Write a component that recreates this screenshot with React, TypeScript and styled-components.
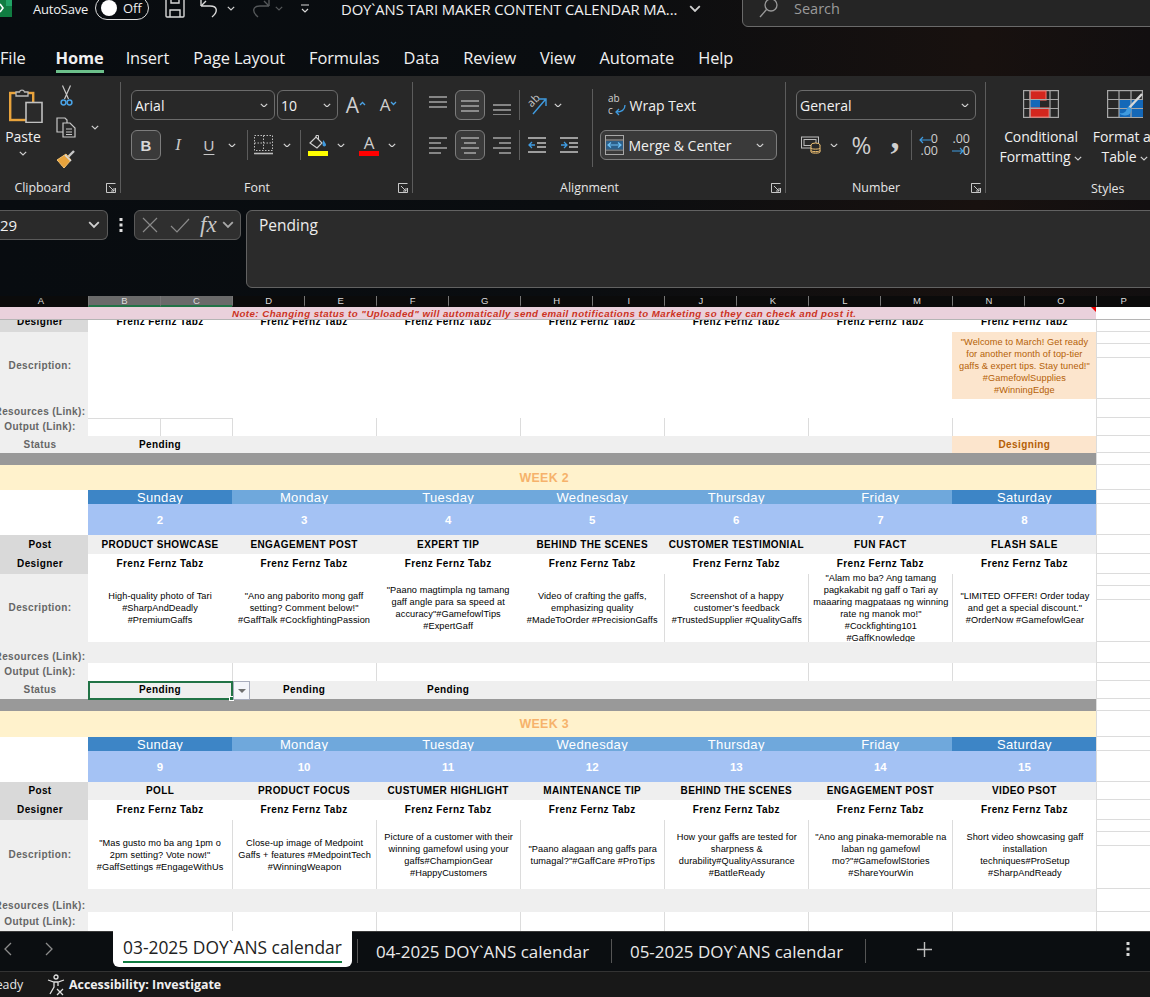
import React from 'react';
import styled, { createGlobalStyle } from 'styled-components';

const Global = createGlobalStyle`
  html, body { margin: 0; padding: 0; background: #0a0d10; }
  #root { width: 1150px; height: 997px; overflow: hidden; }
  * { box-sizing: border-box; }
`;

const ui = `"Open Sans", "Noto Sans", "Liberation Sans", sans-serif`;
const cellFont = `"Liberation Sans", Arial, sans-serif`;

const Page = styled.div`
  width: 1150px; height: 997px; display: flex; flex-direction: column; overflow: hidden;
  font-family: ${ui}; color: #f0f0f0; background: #0a0d10;
`;
const TopBand = styled.div`
  background: linear-gradient(90deg, #080c10 0%, #0a0d10 50%, #18110f 85%, #120f10 100%);
`;
const TitleBar = styled.div`height: 42px; display: flex; align-items: flex-start; overflow: hidden;`;
const LogoMark = styled.svg`flex: none; width: 12px; height: 18px; margin-right: -12px;`;
const Slot = styled.span<{ $w?: number; $ml?: number; $mt?: number }>`
  display: inline-flex; align-items: center; justify-content: center; flex: none;
  width: ${p => (p.$w !== undefined ? `${p.$w}px` : 'auto')};
  margin-left: ${p => p.$ml || 0}px;
  margin-top: ${p => p.$mt || 0}px;
`;
const TopSlot = styled(Slot)`align-self: flex-start;`;
const AutoSave = styled.span`margin-left: 33px; font-size: 13px; line-height: 18px; width: 54px; white-space: nowrap; letter-spacing: -.2px;`;
const Toggle = styled.span`
  margin: -4px 0 0 8px; width: 54px; height: 24px; border: 1.5px solid #ddd; border-radius: 12px;
  display: flex; align-items: center; padding-left: 5px;
`;
const Knob = styled.span`width: 16px; height: 16px; border-radius: 50%; background: #fff; flex: none;`;
const ToggleText = styled.span`font-size: 13px; margin-left: 6px;`;
const DocTitle = styled.span`margin-left: 31px; margin-top: -1px; font-size: 14.85px; line-height: 20px; white-space: nowrap; width: 339px; letter-spacing: -.1px;`;
const SearchBox = styled.div`
  margin: -10px -20px 0 41px; flex: 1; height: 37px; background: #252525; border: 1px solid #6a6a6a; border-radius: 6px;
  display: flex; align-items: flex-end; padding: 0 0 8px 16px; color: #9a9a9a; font-size: 14.5px; line-height: 18px;
`;
const SearchText = styled.span`margin-left: 16px;`;

const MenuBar = styled.div`height: 34px; display: flex; gap: 24px; font-size: 16.4px; letter-spacing: -.1px;`;
const MenuItem = styled.div<{ $on?: boolean }>`
  height: 31px; line-height: 32px; white-space: nowrap;
  font-weight: ${p => (p.$on ? 700 : 400)};
  border-bottom: 3px solid ${p => (p.$on ? '#6cc08b' : 'transparent')};
  margin-left: ${p => (p.$on ? '6px' : '0')};
  margin-right: ${p => (p.$on ? '-2px' : '0')};
`;

const Ribbon = styled.div`height: 124px; background: #282828; display: flex; overflow: hidden; padding-top: 6px;`;
const Group = styled.div<{ $w: number; $pl?: number; $last?: boolean }>`
  width: ${p => p.$w}px; height: 111px; flex: none; display: flex; flex-direction: column; padding-top: 8px;
  padding-left: ${p => p.$pl || 0}px;
  border-right: ${p => (p.$last ? 'none' : '1px solid #5c5c5c')};
`;
const GroupBody = styled.div`display: flex; height: 74px; flex: none;`;
const Footer = styled.div<{ $ml?: number; $pl?: number; $mr?: number }>`
  margin-top: auto; height: 11px; display: flex; align-items: center; font-size: 12.4px; color: #e6e6e6;
  margin-left: ${p => (p.$ml || 0) - (p.$pl || 0)}px;
  padding-right: ${p => p.$mr ?? 4}px;
`;
const FooterLabel = styled.span`flex: 1; text-align: center; line-height: 11px;`;
const StylesLabel = styled.span`margin-left: 105px; margin-top: 2px; line-height: 11px;`;
const Launcher = styled.span`margin-left: 5px; width: 10px; height: 10px; flex: none; display: flex;`;

const Rows = styled.div`display: flex; flex-direction: column; gap: 10px;`;
const BtnRow = styled.div`display: flex; align-items: center; height: 30px;`;
const Combo = styled.div<{ $w: number; $ml?: number }>`
  width: ${p => p.$w}px; height: 30px; margin-left: ${p => p.$ml || 0}px; flex: none;
  border: 1px solid #6b6b6b; border-radius: 6px; display: flex; align-items: center; justify-content: space-between;
  padding: 0 6px 0 3px; font-size: 14px; color: #f2f2f2;
`;
const PressBtn = styled.div<{ $w: number; $ml?: number }>`
  width: ${p => p.$w}px; height: 30px; margin-left: ${p => p.$ml || 0}px; flex: none;
  background: #3a3a3a; border: 1px solid #7d7d7d; border-radius: 6px;
  display: flex; align-items: center; justify-content: center;
`;
const VSep = styled.span<{ $ml?: number; $h?: number }>`
  width: 1px; height: ${p => p.$h || 30}px; background: #5c5c5c; flex: none; margin-left: ${p => p.$ml || 0}px;
`;
const BoldGlyph = styled.span`font: 700 15px ${cellFont}; color: #d8d8d8;`;
const ItalicGlyph = styled.span`font: italic 400 17px "Liberation Serif", serif; color: #c8c8c8;`;
const UnderGlyph = styled.span`font: 400 15px ${cellFont}; color: #c8c8c8; text-decoration: underline; text-underline-offset: 3px;`;
const GrowA = styled.span<{ $s: number }>`font: 400 ${p => p.$s}px ${ui}; color: #cfcfcf; line-height: 20px;`;
const TinyArrow = styled.span`display: inline-flex; align-self: flex-start; margin-top: 6px;`;
const ColorA = styled.div`display: flex; flex-direction: column; align-items: center; width: 20px;`;
const ColorLetter = styled.span`font: 400 17px ${ui}; line-height: 17px; color: #cfcfcf;`;
const ColorBar = styled.span<{ $c: string }>`width: 20px; height: 5px; background: ${p => p.$c};`;
const BucketIcon = styled.svg`margin-bottom: 1px;`;

const PasteCol = styled.div`width: 46px; display: flex; flex-direction: column; align-items: center; margin-top: -3px;`;
const PasteIcon = styled.svg`margin-left: 6px; flex: none;`;
const PasteLabel = styled.span`font-size: 14px; line-height: 18px; margin-top: 5px;`;
const SmallCol = styled.div`width: 20px; margin-left: 10px; margin-top: -5px; display: flex; flex-direction: column; gap: 11px;`;

const AlignBlock = styled.div`width: 162.5px; display: flex; flex-direction: column; gap: 10px; flex: none;`;
const WrapRow = styled.div`display: flex; align-items: center; height: 30px; margin-left: 8px; font-size: 14px; gap: 4px;`;
const MergeBtn = styled.div`
  width: 177px; height: 30px; background: #3a3a3a; border: 1px solid #7d7d7d; border-radius: 6px;
  display: flex; align-items: center; padding-left: 4px; font-size: 14px; gap: 5px;
`;
const MergeChev = styled.span`margin-left: auto; margin-right: 12px; display: flex;`;
const RightBlock = styled.div`display: flex; flex-direction: column; gap: 10px; margin-left: 7px;`;
const SepTall = styled.span`width: 1px; height: 78px; background: #5c5c5c; flex: none; margin-top: -1px;`;
const Glyph = styled.span<{ $s?: number }>`font: 400 ${p => p.$s || 24}px ${ui}; color: #cfcfcf; line-height: 28px;`;
const CommaGlyph = styled.span`font: 700 36px "Liberation Serif", serif; color: #cfcfcf; line-height: 20px; transform: translateY(-9px);`;
const DecBox = styled.span`position: relative; width: 19px; height: 24px; display: block;`;
const DecText = styled.span<{ $t: number; $r: number }>`
  position: absolute; top: ${p => p.$t}px; right: ${p => p.$r}px; font: 400 12.5px ${ui}; line-height: 10px; color: #cfcfcf; white-space: nowrap;
`;
const DecArrow = styled.svg<{ $t: number }>`position: absolute; left: 0; top: ${p => p.$t}px;`;

const StyleCol = styled.div<{ $w: number; $ml?: number }>`
  width: ${p => p.$w}px; margin-left: ${p => p.$ml || 0}px; flex: none; display: flex; flex-direction: column; align-items: center;
  svg { flex: none; }
`;
const StyleLabel = styled.div`font-size: 14px; line-height: 20px; margin-top: 9px; text-align: center; white-space: nowrap; letter-spacing: -.1px;`;
const StyleChev = styled.span`display: inline-block; margin-left: 4px; line-height: 0; vertical-align: middle;`;

const FormulaBar = styled.div`
  height: 96px; display: flex; padding-top: 10px; align-items: flex-start;
  background: linear-gradient(90deg, #080c10 0%, #0a0d10 50%, #18110f 85%, #120f10 100%);
`;
const NameBox = styled.div`
  width: 108px; height: 30px; background: #2a2a2a; border: 1px solid #5a5a5a; border-left: none; border-radius: 0 6px 6px 0;
  display: flex; align-items: center; justify-content: space-between; padding-right: 7px; font-size: 15px;
`;
const Kebab = styled.span`width: 26px; height: 30px; flex: none; display: flex; align-items: center; justify-content: center;`;
const FxBox = styled.div`
  width: 107px; height: 30px; background: #2f2f2f; border: 1px solid #5a5a5a; border-radius: 6px; display: flex; align-items: center; flex: none;
`;
const FxGlyph = styled.span`font: italic 400 23px "Liberation Serif", serif; color: #c8c8c8; margin-left: 10px; width: 22px; line-height: 24px;`;
const FormulaInput = styled.div`
  flex: 1; margin: 0 -12px 0 5px; height: 78px; background: #2b2b2b; border: 1px solid #626262; border-radius: 6px;
  padding: 3px 12px; font-size: 15.5px; line-height: 22px; color: #ececec;
`;

const ColHeads = styled.div`height: 11px; display: grid; grid-template-columns: 88px repeat(14, 72.04px) 1fr; background: #0b0b0b;`;
const ColHead = styled.div<{ $sel?: boolean; $first?: boolean }>`
  font: 400 9.5px ${cellFont}; line-height: 10px; text-align: center; color: #dcdcdc; height: 11px;
  background: ${p => (p.$sel ? '#6a6a6a' : 'transparent')};
  border-left: ${p => (p.$first ? 'none' : '1px solid #777')};
  border-bottom: 2px solid ${p => (p.$sel ? '#217346' : 'transparent')};
  padding-right: ${p => (p.$first ? '6px' : '0')};
`;

const Sheet = styled.div`height: 624px; background: #fff; overflow: hidden; display: flex; flex-direction: column; font-family: ${cellFont}; flex: none;`;
const Row = styled.div<{ $h: number; $clip?: boolean }>`
  height: ${p => p.$h}px; flex: none; display: grid; grid-template-columns: 88px repeat(7, 144.07px) 1fr;
  grid-template-rows: ${p => p.$h}px;
  overflow: ${p => (p.$clip ? 'hidden' : 'visible')};
`;
const NoteBand = styled.div`
  grid-column: 1 / 9; position: relative; background: #ead1dc; color: #cc3322; display: flex; align-items: center; justify-content: center;
  font: italic 700 9.7px ${cellFont}; letter-spacing: .46px; white-space: nowrap; padding-right: 8px;
`;
const CommentMark = styled.span`
  position: absolute; top: 0; right: 0; width: 0; height: 0; border-top: 5px solid #e00; border-left: 5px solid transparent;
`;
const FreezeLine = styled.div`height: 1px; flex: none; background: #b5b5b5;`;
const Band = styled.div<{ $bg: string }>`
  grid-column: 1 / 9; background: ${p => p.$bg}; display: flex; align-items: center; justify-content: center; padding-right: 8px;
`;
const WeekText = styled.span`font: 700 12.4px ${cellFont}; letter-spacing: .3px; color: #f6b26b;`;
const RowLabel = styled.div<{ $bg?: string; $fg?: string; $bottom?: boolean; $end?: boolean }>`
  background: ${p => p.$bg || '#efefef'}; color: ${p => p.$fg || '#666'}; display: flex; justify-content: center; padding-right: 8px;
  align-items: ${p => (p.$end || p.$bottom ? 'flex-end' : 'center')};
  font-size: 10px; font-weight: 700; letter-spacing: .38px; white-space: nowrap; line-height: ${p => (p.$end ? '20px' : '12px')};
`;
const Cell = styled.div<{ $bg?: string; $fg?: string; $line?: boolean; $end?: boolean; $split?: boolean; $b?: boolean; $top?: boolean }>`
  position: relative; background-color: ${p => p.$bg || '#fff'}; color: ${p => p.$fg || '#000'};
  display: flex; align-items: ${p => (p.$end ? 'flex-end' : 'center')}; justify-content: center; text-align: center; min-width: 0;
  border-left: ${p => (p.$line ? '1px solid #dcdcdc' : 'none')};
  box-shadow: ${p => (p.$top ? 'inset 0 1px 0 #dcdcdc' : 'none')};
  background-image: ${p => (p.$split ? 'linear-gradient(#dcdcdc, #dcdcdc)' : 'none')};
  background-size: 1px 100%; background-position: 72px 0; background-repeat: no-repeat;
  font-size: 10px; font-weight: ${p => (p.$b ? 700 : 400)}; letter-spacing: ${p => (p.$b ? '.38px' : '0')};
  white-space: pre-line; line-height: ${p => (p.$end ? '20px' : '12px')}; overflow: ${p => (p.$b ? 'visible' : 'hidden')};
`;
const DescText = styled.span`font-size: 9.2px; letter-spacing: .08px; line-height: 12px; flex: none;`;
const DayCell = styled.div<{ $edge: boolean }>`
  background: ${p => (p.$edge ? '#3d85c6' : '#6fa8dc')}; color: #fff; display: flex; align-items: center; justify-content: center;
  font-size: 13px; letter-spacing: .35px; line-height: 14px; overflow: hidden; padding-top: 1px;
`;
const DateCell = styled.div`
  background: #a4c2f4; color: #fff; display: flex; align-items: center; justify-content: center; font-size: 11.5px; font-weight: 700;
`;
const Filler = styled.div`
  border-left: 1px solid #dcdcdc; border-bottom: 1px solid #dcdcdc; background: #fff; display: flex; flex-direction: column;
`;
const FillerPart = styled.div<{ $h?: number }>`
  flex: ${p => (p.$h ? `0 0 ${p.$h}px` : 1)}; border-bottom: 1px solid #dcdcdc;
  &:last-child { border-bottom: none; }
`;
const Selection = styled.span`
  position: absolute; inset: 0 -1px -1px 0; border: 2px solid #217346; z-index: 2; pointer-events: none;
`;
const FillHandle = styled.span`
  position: absolute; right: -3px; bottom: -3px; width: 5px; height: 5px; background: #217346; border: 1px solid #fff;
`;
const DropBtn = styled.span`
  position: absolute; left: 100%; top: 0; margin-left: 1px; width: 17px; height: 19px; background: #f4f5fa; border: 1px solid #a9adbd; z-index: 3;
  display: flex; align-items: center; justify-content: center;
`;
const DropTri = styled.span`width: 0; height: 0; border: 4px solid transparent; border-top: 4px solid #707070; border-bottom: none;`;

const TabBar = styled.div`
  height: 40px; flex: none; background: #0b0e11; display: flex; align-items: flex-start; border-top: 1px solid #3a3a3a; font-size: 16.95px; color: #eaeaea;
`;
const ActiveTab = styled.div`
  margin-left: 60px; margin-top: -1px; width: 239px; height: 36px; background: #fff; color: #222; border-radius: 0 0 6px 6px; padding: 0 10px; flex: none;
  display: flex; flex-direction: column; white-space: nowrap; font-size: 17.4px;
`;
const ActiveText = styled.div`line-height: 33px; border-bottom: 2px solid #107c41; height: 32px;`;
const TabGap = styled.span`width: 5px; flex: none;`;
const TabName = styled.div<{ $w: number; $pl: number }>`
  width: ${p => p.$w}px; padding-left: ${p => p.$pl}px; flex: none; line-height: 40px; white-space: nowrap; height: 39px;
`;
const TabSep = styled.span`width: 1px; height: 24px; background: #555; flex: none; margin-top: 7px;`;
const TabIcon = styled.span<{ $ml: number }>`margin-left: ${p => p.$ml}px; margin-top: 10px; flex: none; display: flex;`;

const StatusBar = styled.div`
  height: 26px; flex: none; background: #181818; border-top: 1px solid #333; display: flex; align-items: center; font-size: 12.4px; color: #e6e6e6;
`;
const ReadyText = styled.span`margin-left: -12px; width: 59px; flex: none;`;
const AccessIcon = styled.svg`flex: none;`;
const AccessText = styled.span`font-weight: 700; margin-left: 4px; color: #f0f0f0;`;

const G = '#c4c4c4';

const Chev = ({ c = '#d0d0d0', w = 8 }: { c?: string; w?: number }) => (
  <svg width={w} height={w * 0.6} viewBox="0 0 10 6" fill="none" stroke={c} strokeWidth="1.5"><path d="M1 1l4 4 4-4" /></svg>
);
const LauncherIcon = () => (
  <svg width="10" height="10" viewBox="0 0 10 10" fill="none" stroke="#c8c8c8" strokeWidth="1">
    <path d="M.5 4V.5H9.5M.5 .5V9.5H9.5V5" /><path d="M3 3l5 5M8 5v3H5" />
  </svg>
);
const LinesIcon = ({ w = 18, kind }: { w?: number; kind: 'l' | 'c' | 'r' | 'top' | 'mid' | 'bot' }) => {
  const rows = kind === 'top' || kind === 'mid' || kind === 'bot' ? [[0, 18], [0, 18], [0, 18]] :
    kind === 'l' ? [[0, 18], [0, 12], [0, 18], [0, 12]] : kind === 'c' ? [[0, 18], [3, 15], [0, 18], [3, 15]] : [[0, 18], [6, 18], [0, 18], [6, 18]];
  const start = kind === 'top' ? 0 : kind === 'mid' ? 4 : kind === 'bot' ? 8 : 1;
  return (
    <svg width={w} height="20" viewBox="0 0 18 20" stroke={G} strokeWidth="1.2" fill="none">
      {rows.map((r, i) => <path key={i} d={`M${r[0]} ${start + 2 + i * 5}H${r[1]}`} />)}
    </svg>
  );
};
const IndentIcon = ({ dir }: { dir: 'out' | 'in' }) => (
  <svg width="18" height="18" viewBox="0 0 18 18" fill="none" strokeWidth="1.3">
    <path d="M0 2H18M9 7H18M9 11H18M0 16H18" stroke={G} />
    <path d={dir === 'out' ? 'M7 9H1M4 6L1 9l3 3' : 'M1 9H7M4 6l3 3-3 3'} stroke="#3f9be0" />
  </svg>
);

const wk2 = [
  ['PRODUCT SHOWCASE', 'High-quality photo of Tari\n#SharpAndDeadly\n#PremiumGaffs'],
  ['ENGAGEMENT POST', '"Ano ang paborito mong gaff\nsetting? Comment below!"\n#GaffTalk #CockfightingPassion'],
  ['EXPERT TIP', '"Paano magtimpla ng tamang\ngaff angle para sa speed at\naccuracy"#GamefowlTips\n#ExpertGaff'],
  ['BEHIND THE SCENES', 'Video of crafting the gaffs,\nemphasizing quality\n#MadeToOrder #PrecisionGaffs'],
  ['CUSTOMER TESTIMONIAL', 'Screenshot of a happy\ncustomer\u2019s feedback\n#TrustedSupplier #QualityGaffs'],
  ['FUN FACT', '"Alam mo ba? Ang tamang\npagkakabit ng gaff o Tari ay\nmaaaring magpataas ng winning\nrate ng manok mo!"\n#Cockfighting101\n#GaffKnowledge'],
  ['FLASH SALE', '"LIMITED OFFER! Order today\nand get a special discount."\n#OrderNow #GamefowlGear'],
];
const wk3 = [
  ['POLL', '"Mas gusto mo ba ang 1pm o\n2pm setting? Vote now!"\n#GaffSettings #EngageWithUs'],
  ['PRODUCT FOCUS', 'Close-up image of Medpoint\nGaffs + features #MedpointTech\n#WinningWeapon'],
  ['CUSTUMER HIGHLIGHT', 'Picture of a customer with their\nwinning gamefowl using your\ngaffs#ChampionGear\n#HappyCustomers'],
  ['MAINTENANCE TIP', '"Paano alagaan ang gaffs para\ntumagal?"#GaffCare #ProTips'],
  ['BEHIND THE SCENES', 'How your gaffs are tested for\nsharpness &\ndurability#QualityAssurance\n#BattleReady'],
  ['ENGAGEMENT POST', '"Ano ang pinaka-memorable na\nlaban ng gamefowl\nmo?"#GamefowlStories\n#ShareYourWin'],
  ['VIDEO PSOT', 'Short video showcasing gaff\ninstallation\ntechniques#ProSetup\n#SharpAndReady'],
];
const days = ['Sunday', 'Monday', 'Tuesday', 'Wednesday', 'Thursday', 'Friday', 'Saturday'];
const idx = [0, 1, 2, 3, 4, 5, 6];

const Week = ({ title, start, data, hs, descLines, outLines, statuses }: {
  title: string; start: number; data: string[][]; hs: number[]; descLines: number[]; outLines: number[]; statuses?: boolean;
}) => (
  <>
    <Row $h={hs[0]}><Band $bg="#fff2cc"><WeekText>{title}</WeekText></Band><Filler /></Row>
    <Row $h={hs[1]}>
      <Cell />
      {days.map((d, i) => <DayCell key={d} $edge={i === 0 || i === 6}>{d}</DayCell>)}
      <Filler />
    </Row>
    <Row $h={hs[2]}>
      <Cell />
      {idx.map(i => <DateCell key={i}>{start + i}</DateCell>)}
      <Filler />
    </Row>
    <Row $h={hs[3]}>
      <RowLabel $bg="#d9d9d9" $fg="#000">Post</RowLabel>
      {data.map((d, i) => <Cell key={i} $bg="#efefef" $b>{d[0]}</Cell>)}
      <Filler />
    </Row>
    <Row $h={hs[4]}>
      <RowLabel $bg="#d9d9d9" $fg="#000">Designer</RowLabel>
      {idx.map(i => <Cell key={i} $b>Frenz Fernz Tabz</Cell>)}
      <Filler />
    </Row>
    <Row $h={hs[5]}>
      <RowLabel>Description:</RowLabel>
      {data.map((d, i) => <Cell key={i} $line={descLines.includes(i)}><DescText>{d[1]}</DescText></Cell>)}
      <Filler><FillerPart $h={12} /><FillerPart $h={14} /><FillerPart /></Filler>
    </Row>
    <Row $h={hs[6]}>
      <RowLabel $bottom>Resources (Link):</RowLabel>
      {idx.map(i => <Cell key={i} $bg="#efefef" />)}
      <Filler />
    </Row>
    <Row $h={hs[7]}>
      <RowLabel>Output (Link):</RowLabel>
      {idx.map(i => <Cell key={i} $line={outLines.includes(i)} />)}
      <Filler />
    </Row>
    {statuses && (
      <>
        <Row $h={18}>
          <RowLabel>Status</RowLabel>
          {idx.map(i => (
            <Cell key={i} $bg="#efefef" $b>
              {i < 3 ? 'Pending' : ''}
              {i === 0 && <Selection><FillHandle /></Selection>}
              {i === 0 && <DropBtn><DropTri /></DropBtn>}
            </Cell>
          ))}
          <Filler />
        </Row>
        <Row $h={12}><Band $bg="#999" /><Filler /></Row>
      </>
    )}
  </>
);

export default function App() {
  return (
    <Page>
      <Global />
      <TopBand>
        <TitleBar>
          <LogoMark viewBox="0 0 12 18">
            <rect width="12" height="17" fill="#107c41" /><rect x="6" width="6" height="6" fill="#21a366" /><path d="M0 4l3 4-3 4" stroke="#fff" strokeWidth="1.6" fill="none" />
          </LogoMark>
          <AutoSave>AutoSave</AutoSave>
          <Toggle><Knob /><ToggleText>Off</ToggleText></Toggle>
          <Slot $w={20} $ml={16}>
            <svg width="20" height="18" viewBox="0 0 20 18" fill="none" stroke="#d8d8d8" strokeWidth="1.4">
              <path d="M1 -3V16a1 1 0 0 0 1 1H18a1 1 0 0 0 1-1V-3M5 17V10H15V17M6 -3V3H14V-3" />
            </svg>
          </Slot>
          <Slot $w={20} $ml={15}>
            <svg width="20" height="18" viewBox="0 0 20 18" fill="none" stroke="#d8d8d8" strokeWidth="1.4">
              <path d="M1 6L6 1M1 6h9c8 0 8 6 2 11" /><path d="M1 -1V6" />
            </svg>
          </Slot>
          <Slot $w={8} $ml={7} $mt={6}><Chev /></Slot>
          <Slot $w={21} $ml={14}>
            <svg width="21" height="18" viewBox="0 0 21 18" fill="none" stroke="#55585a" strokeWidth="1.4">
              <path d="M20 6L15 1M20 6h-9c-8 0-8 6-2 11" /><path d="M20 -1V6" />
            </svg>
          </Slot>
          <Slot $w={8} $ml={5} $mt={6}><Chev c="#55585a" /></Slot>
          <Slot $w={10} $ml={17} $mt={4}>
            <svg width="10" height="10" viewBox="0 0 10 10" fill="none" stroke="#d8d8d8" strokeWidth="1.2"><path d="M1 1H9M2 5l3 3 3-3" /></svg>
          </Slot>
          <DocTitle>DOY`ANS TARI MAKER CONTENT CALENDAR MA...</DocTitle>
          <Slot $w={12} $ml={9} $mt={5}><Chev w={12} /></Slot>
          <SearchBox>
            <svg width="19" height="20" viewBox="0 0 19 20" fill="none" stroke="#9a9a9a" strokeWidth="1.3"><circle cx="12" cy="7" r="6" /><path d="M7.500 11.500L1 19" /></svg>
            <SearchText>Search</SearchText>
          </SearchBox>
        </TitleBar>
        <MenuBar>
          <MenuItem>File</MenuItem>
          <MenuItem $on>Home</MenuItem>
          <MenuItem>Insert</MenuItem>
          <MenuItem>Page Layout</MenuItem>
          <MenuItem>Formulas</MenuItem>
          <MenuItem>Data</MenuItem>
          <MenuItem>Review</MenuItem>
          <MenuItem>View</MenuItem>
          <MenuItem>Automate</MenuItem>
          <MenuItem>Help</MenuItem>
        </MenuBar>
      </TopBand>

      <Ribbon>
        <Group $w={121}>
          <GroupBody>
            <PasteCol>
              <PasteIcon width="34" height="36" viewBox="0 0 34 36" fill="none">
                <rect x="1.200" y="6" width="23" height="27" stroke="#e8a33c" strokeWidth="2.400" />
                <path d="M7 9V5h3.500a2.600 2.600 0 0 1 5 0H19v4z" stroke="#b8b8b8" fill="#282828" strokeWidth="1.300" />
                <rect x="17" y="15.500" width="16" height="20" fill="#2a2a2a" stroke="#c0c0c0" strokeWidth="1.600" />
              </PasteIcon>
              <PasteLabel>Paste</PasteLabel>
              <Slot $mt={5}><Chev /></Slot>
            </PasteCol>
            <SmallCol>
              <Slot>
                <svg width="13" height="21" viewBox="0 0 13 21" fill="none" strokeWidth="1.2">
                  <path d="M2.500 .5L8.500 14M10.500 .5L4.500 14" stroke="#c8c8c8" />
                  <circle cx="3.500" cy="17.500" r="2.400" stroke="#4aa3e6" strokeWidth="1.500" /><circle cx="9.500" cy="17.500" r="2.400" stroke="#4aa3e6" strokeWidth="1.500" />
                </svg>
              </Slot>
              <Slot>
                <svg width="20" height="21" viewBox="0 0 20 21" fill="none" stroke="#c8c8c8" strokeWidth="1.2">
                  <path d="M7 15H1V1H9L11 3V6" /><path d="M7 6H14L19 11V20H7Z" /><path d="M10 12H16M10 15H16M10 17.500H16" />
                </svg>
              </Slot>
              <Slot>
                <svg width="20" height="20" viewBox="0 0 20 20" fill="none">
                  <path d="M12 8L18 2" stroke="#c8c8c8" strokeWidth="2.400" />
                  <path d="M1 11L10 5L15 11L8 19C6 17 4 14 1 11Z" fill="#e8a33c" stroke="#f3c474" strokeWidth="1" />
                  <path d="M9 6l6 6" stroke="#d8d8d8" strokeWidth="1.600" />
                </svg>
              </Slot>
            </SmallCol>
            <TopSlot $w={8} $ml={15} $mt={35}><Chev /></TopSlot>
          </GroupBody>
          <Footer $ml={-16}>
            <FooterLabel>Clipboard</FooterLabel>
            <Launcher><LauncherIcon /></Launcher>
          </Footer>
        </Group>

        <Group $w={292} $pl={10}>
          <Rows>
            <BtnRow>
              <Combo $w={144}>Arial<Chev /></Combo>
              <Combo $w={61} $ml={2}>10<Chev /></Combo>
              <Slot $w={20} $ml={8}><GrowA $s={21}>A</GrowA><TinyArrow><svg width="7" height="5" viewBox="0 0 7 5" fill="none" stroke="#4aa3e6" strokeWidth="1.300"><path d="M1 4l2.500-2.500L6 4" /></svg></TinyArrow></Slot>
              <Slot $w={17} $ml={14}><GrowA $s={17}>A</GrowA><TinyArrow><svg width="7" height="5" viewBox="0 0 7 5" fill="none" stroke="#4aa3e6" strokeWidth="1.300"><path d="M1 1l2.500 2.500L6 1" /></svg></TinyArrow></Slot>
            </BtnRow>
            <BtnRow>
              <PressBtn $w={30}><BoldGlyph>B</BoldGlyph></PressBtn>
              <Slot $w={10} $ml={12}><ItalicGlyph>I</ItalicGlyph></Slot>
              <Slot $w={12} $ml={20}><UnderGlyph>U</UnderGlyph></Slot>
              <Slot $w={8} $ml={13}><Chev /></Slot>
              <VSep $ml={11} />
              <Slot $w={19} $ml={6}>
                <svg width="19" height="20" viewBox="0 0 19 20" fill="none" stroke="#bdbdbd" strokeWidth="1">
                  <rect x=".5" y=".5" width="18" height="15" strokeDasharray="1.500 1.500" />
                  <path d="M.5 8H18.500M9.500 .5V15.500" strokeDasharray="1.500 1.500" /><path d="M0 18.500H19" strokeWidth="1.600" />
                </svg>
              </Slot>
              <Slot $w={8} $ml={10}><Chev /></Slot>
              <VSep $ml={9} />
              <Slot $w={20} $ml={7}>
                <ColorA>
                  <BucketIcon width="18" height="15" viewBox="0 0 18 15" fill="none">
                    <path d="M1 8L7 2L13 8L8 13Z" stroke="#d0d0d0" strokeWidth="1.200" />
                    <path d="M7 2V0.500H9.500V4" stroke="#d0d0d0" strokeWidth="1" />
                    <path d="M14 5c2 2 3 4 3 5s-1.500 2-3 1c-1-1 0-4 0-6z" fill="#3f9be0" />
                  </BucketIcon>
                  <ColorBar $c="#ffff00" />
                </ColorA>
              </Slot>
              <Slot $w={8} $ml={9}><Chev /></Slot>
              <Slot $w={20} $ml={14}>
                <ColorA><ColorLetter>A</ColorLetter><ColorBar $c="#ff0000" /></ColorA>
              </Slot>
              <Slot $w={8} $ml={9}><Chev /></Slot>
            </BtnRow>
          </Rows>
          <Footer $pl={10} $mr={4}>
            <FooterLabel>Font</FooterLabel>
            <Launcher><LauncherIcon /></Launcher>
          </Footer>
        </Group>

        <Group $w={373} $pl={16}>
          <GroupBody>
            <AlignBlock>
              <BtnRow>
                <Slot $w={18}><LinesIcon kind="top" /></Slot>
                <PressBtn $w={30} $ml={8}><LinesIcon kind="mid" /></PressBtn>
                <Slot $w={19} $ml={7}><LinesIcon kind="bot" /></Slot>
                <VSep $ml={8} />
                <Slot $w={21} $ml={7}>
                  <svg width="21" height="22" viewBox="0 0 21 22" fill="none" strokeWidth="1.400">
                    <text x="1" y="11" transform="rotate(-45 6 8)" fontFamily="Open Sans" fontSize="11" fill="#c8c8c8" stroke="none">ab</text>
                    <path d="M6 20L18 6M12 5h7v7" stroke="#3f9be0" />
                  </svg>
                </Slot>
                <Slot $w={8} $ml={6}><Chev /></Slot>
              </BtnRow>
              <BtnRow>
                <Slot $w={18}><LinesIcon kind="l" /></Slot>
                <PressBtn $w={30} $ml={8}><LinesIcon kind="c" /></PressBtn>
                <Slot $w={19} $ml={7}><LinesIcon kind="r" /></Slot>
                <VSep $ml={8} />
                <Slot $w={18} $ml={8}><IndentIcon dir="out" /></Slot>
                <Slot $w={18} $ml={14}><IndentIcon dir="in" /></Slot>
              </BtnRow>
            </AlignBlock>
            <SepTall />
            <RightBlock>
              <WrapRow>
                <svg width="18" height="22" viewBox="0 0 18 22" fill="none">
                  <text x="0" y="8" fontFamily="Open Sans" fontSize="10" fill="#d0d0d0">ab</text>
                  <text x="0" y="20" fontFamily="Open Sans" fontSize="10" fill="#d0d0d0">c</text>
                  <path d="M17 11c0 5-3 7-9 7M11 15l-3 3 3 3" stroke="#3f9be0" strokeWidth="1.300" />
                </svg>
                <span>Wrap Text</span>
              </WrapRow>
              <MergeBtn>
                <svg width="19" height="20" viewBox="0 0 19 20" fill="none">
                  <rect x=".5" y=".5" width="18" height="19" stroke="#a8a8a8" />
                  <path d="M0 5H19M0 15H19" stroke="#a8a8a8" strokeWidth="1" />
                  <rect x="1" y="6" width="17" height="8.500" fill="#2c5e88" />
                  <path d="M3 10H16M6 7.500L3 10l3 2.500M13 7.500L16 10l-3 2.500" stroke="#6cc0f5" strokeWidth="1.200" />
                </svg>
                <span>Merge &amp; Center</span>
                <MergeChev><Chev /></MergeChev>
              </MergeBtn>
            </RightBlock>
          </GroupBody>
          <Footer $pl={16} $mr={4}>
            <FooterLabel>Alignment</FooterLabel>
            <Launcher><LauncherIcon /></Launcher>
          </Footer>
        </Group>

        <Group $w={200} $pl={10}>
          <Rows>
            <BtnRow><Combo $w={180}>General<Chev /></Combo></BtnRow>
            <BtnRow>
              <Slot $w={20} $ml={5}>
                <svg width="20" height="18" viewBox="0 0 20 18" fill="none">
                  <rect x=".5" y="1" width="17" height="11" stroke="#bdbdbd" /><rect x="3" y="3.500" width="12" height="6" stroke="#bdbdbd" />
                  <ellipse cx="14.500" cy="9" rx="4.500" ry="2" fill="#282828" stroke="#f3c474" />
                  <path d="M10 9v7c0 1.500 9 1.500 9 0V9M10 12c0 1.500 9 1.500 9 0M10 14.500c0 1.500 9 1.500 9 0" stroke="#f3c474" fill="#282828" />
                </svg>
              </Slot>
              <Slot $w={8} $ml={9}><Chev /></Slot>
              <Slot $w={19} $ml={14}><Glyph>%</Glyph></Slot>
              <Slot $w={10} $ml={19}><CommaGlyph>,</CommaGlyph></Slot>
              <VSep $ml={11} />
              <Slot $w={19} $ml={7}>
                <DecBox>
                  <DecArrow $t={3} width="13" height="8" viewBox="0 0 13 8" fill="none" stroke="#3f9be0" strokeWidth="1.200"><path d="M12 4H1M4 1L1 4l3 3" /></DecArrow>
                  <DecText $t={1} $r={0}>0</DecText>
                  <DecText $t={13} $r={0}>.00</DecText>
                </DecBox>
              </Slot>
              <Slot $w={19} $ml={13}>
                <DecBox>
                  <DecText $t={1} $r={0}>.00</DecText>
                  <DecArrow $t={14} width="13" height="8" viewBox="0 0 13 8" fill="none" stroke="#3f9be0" strokeWidth="1.200"><path d="M1 4H12M9 1l3 3-3 3" /></DecArrow>
                  <DecText $t={13} $r={0}>0</DecText>
                </DecBox>
              </Slot>
            </BtnRow>
          </Rows>
          <Footer $pl={10} $mr={4}>
            <FooterLabel>Number</FooterLabel>
            <Launcher><LauncherIcon /></Launcher>
          </Footer>
        </Group>

        <Group $w={200} $last>
          <GroupBody>
            <StyleCol $w={86} $ml={12}>
              <svg width="36" height="28" viewBox="0 0 36 28" fill="none" stroke="#a8a8a8" strokeWidth="1.200">
                <rect x=".6" y=".6" width="34.800" height="26.800" />
                <rect x="7" y="1" width="16" height="9" fill="#d3261e" stroke="#ea6a62" />
                <rect x="7" y="10" width="10" height="8" fill="#1468b8" stroke="none" />
                <rect x="7" y="18" width="19" height="9" fill="#d3261e" stroke="#ea6a62" />
                <path d="M7 0V28M27 0V28M0 9.500H36M0 18.500H36" />
              </svg>
              <StyleLabel>Conditional<br />Formatting<StyleChev><Chev /></StyleChev></StyleLabel>
            </StyleCol>
            <StyleCol $w={70} $ml={6}>
              <svg width="36" height="28" viewBox="0 0 36 28" fill="none" stroke="#a8a8a8" strokeWidth="1.200">
                <rect x=".6" y=".6" width="34.800" height="26.800" />
                <rect x="12" y="9" width="24" height="18" fill="#1468b8" stroke="none" />
                <path d="M12 0V28M24 0V28M0 9.500H36M0 18.500H36" />
                <path d="M35 4L22 18" stroke="#d8d8d8" strokeWidth="2.400" />
                <path d="M22 17c-3 0-2 4-4 5-2 2-6 1-6 1 2 3 10 4 12-1 1-2 1-4-2-5z" fill="#3f9be0" stroke="none" />
              </svg>
              <StyleLabel>Format as<br />Table<StyleChev><Chev /></StyleChev></StyleLabel>
            </StyleCol>
          </GroupBody>
          <Footer $mr={0}><StylesLabel>Styles</StylesLabel></Footer>
        </Group>
      </Ribbon>

      <FormulaBar>
        <NameBox>29<Chev w={12} /></NameBox>
        <Kebab>
          <svg width="4" height="14" viewBox="0 0 4 14" fill="#e0e0e0"><rect x="0.500" width="3" height="3" /><rect x="0.500" y="5.500" width="3" height="3" /><rect x="0.500" y="11" width="3" height="3" /></svg>
        </Kebab>
        <FxBox>
          <Slot $w={16} $ml={7}><svg width="16" height="16" viewBox="0 0 16 16" stroke="#8a8a8a" strokeWidth="1.200"><path d="M1 1L15 15M15 1L1 15" /></svg></Slot>
          <Slot $w={20} $ml={12}><svg width="20" height="15" viewBox="0 0 20 15" fill="none" stroke="#8a8a8a" strokeWidth="1.200"><path d="M1 8L7 14L19 1" /></svg></Slot>
          <FxGlyph>fx</FxGlyph>
          <Slot $w={12}><Chev w={12} c="#a8a8a8" /></Slot>
        </FxBox>
        <FormulaInput>Pending</FormulaInput>
      </FormulaBar>

      <ColHeads>
        {'ABCDEFGHIJKLMNOP'.split('').map(c => (
          <ColHead key={c} $sel={c === 'B' || c === 'C'} $first={c === 'A'}>{c}</ColHead>
        ))}
      </ColHeads>

      <Sheet>
        <Row $h={12}>
          <NoteBand>
            Note: Changing status to "Uploaded" will automatically send email notifications to Marketing so they can check and post it.
            <CommentMark />
          </NoteBand>
          <Cell />
        </Row>
        <FreezeLine />
        <Row $h={12} $clip>
          <RowLabel $bg="#d9d9d9" $fg="#000" $end>Designer</RowLabel>
          {idx.map(i => <Cell key={i} $end $b>Frenz Fernz Tabz</Cell>)}
          <Filler />
        </Row>
        <Row $h={67}>
          <RowLabel>Description:</RowLabel>
          {idx.map(i => (
            <Cell key={i} $bg={i === 6 ? '#fce5cd' : '#fff'} $fg="#b45f06">
              {i === 6 && <DescText>{'"Welcome to March! Get ready\nfor another month of top-tier\ngaffs & expert tips. Stay tuned!"\n#GamefowlSupplies\n#WinningEdge'}</DescText>}
            </Cell>
          ))}
          <Filler><FillerPart $h={12} /><FillerPart $h={14} /><FillerPart /></Filler>
        </Row>
        <Row $h={19}>
          <RowLabel $bottom>Resources (Link):</RowLabel>
          {idx.map(i => <Cell key={i} />)}
          <Filler />
        </Row>
        <Row $h={18}>
          <RowLabel>Output (Link):</RowLabel>
          {idx.map(i => <Cell key={i} $line={i > 0} $split={i === 0} $top={i === 0} />)}
          <Filler />
        </Row>
        <Row $h={17}>
          <RowLabel>Status</RowLabel>
          {idx.map(i => (
            <Cell key={i} $b $bg={i === 6 ? '#fce5cd' : '#efefef'} $fg={i === 6 ? '#b45f06' : '#000'}>
              {i === 0 ? 'Pending' : i === 6 ? 'Designing' : ''}
            </Cell>
          ))}
          <Filler />
        </Row>
        <Row $h={12}><Band $bg="#999" /><Filler /></Row>
        <Week title="WEEK 2" start={2} data={wk2} hs={[25, 14, 31, 19, 20, 68, 21, 18]} descLines={[4, 5, 6]} outLines={[1, 2, 5, 6]} statuses />
        <Week title="WEEK 3" start={9} data={wk3} hs={[26, 14, 31, 18, 20, 69, 23, 20]} descLines={[1, 2, 3, 4, 5, 6]} outLines={[1, 2, 3, 4, 5, 6]} />
      </Sheet>

      <TabBar>
        <TabIcon $ml={4}><svg width="8" height="14" viewBox="0 0 8 14" fill="none" stroke="#8c8c8c" strokeWidth="1.300"><path d="M7 1L1 7l6 6" /></svg></TabIcon>
        <TabIcon $ml={33}><svg width="8" height="14" viewBox="0 0 8 14" fill="none" stroke="#8c8c8c" strokeWidth="1.300"><path d="M1 1l6 6-6 6" /></svg></TabIcon>
        <ActiveTab><ActiveText>03-2025 DOY`ANS calendar</ActiveText></ActiveTab>
        <TabGap />
        <TabSep />
        <TabName $w={253} $pl={18}>04-2025 DOY`ANS calendar</TabName>
        <TabSep />
        <TabName $w={253} $pl={18}>05-2025 DOY`ANS calendar</TabName>
        <TabSep />
        <TabIcon $ml={51}><svg width="15" height="15" viewBox="0 0 15 15" stroke="#bdbdbd" strokeWidth="1.400"><path d="M7.500 0V15M0 7.500H15" /></svg></TabIcon>
        <TabIcon $ml={194}><svg width="4" height="14" viewBox="0 0 4 14" fill="#d8d8d8"><rect x=".5" width="3" height="3" /><rect x=".5" y="5.500" width="3" height="3" /><rect x=".5" y="11" width="3" height="3" /></svg></TabIcon>
      </TabBar>
      <StatusBar>
        <ReadyText>Ready</ReadyText>
        <AccessIcon width="18" height="22" viewBox="0 0 18 22" fill="none" stroke="#e0e0e0" strokeWidth="1.300">
          <circle cx="9" cy="3" r="2" />
          <path d="M1 6L7 8H11L17 6M7 8V13L3 20M11 8V12" />
          <path d="M10 15L16 21M16 15L10 21" />
        </AccessIcon>
        <AccessText>Accessibility: Investigate</AccessText>
      </StatusBar>
    </Page>
  );
}
